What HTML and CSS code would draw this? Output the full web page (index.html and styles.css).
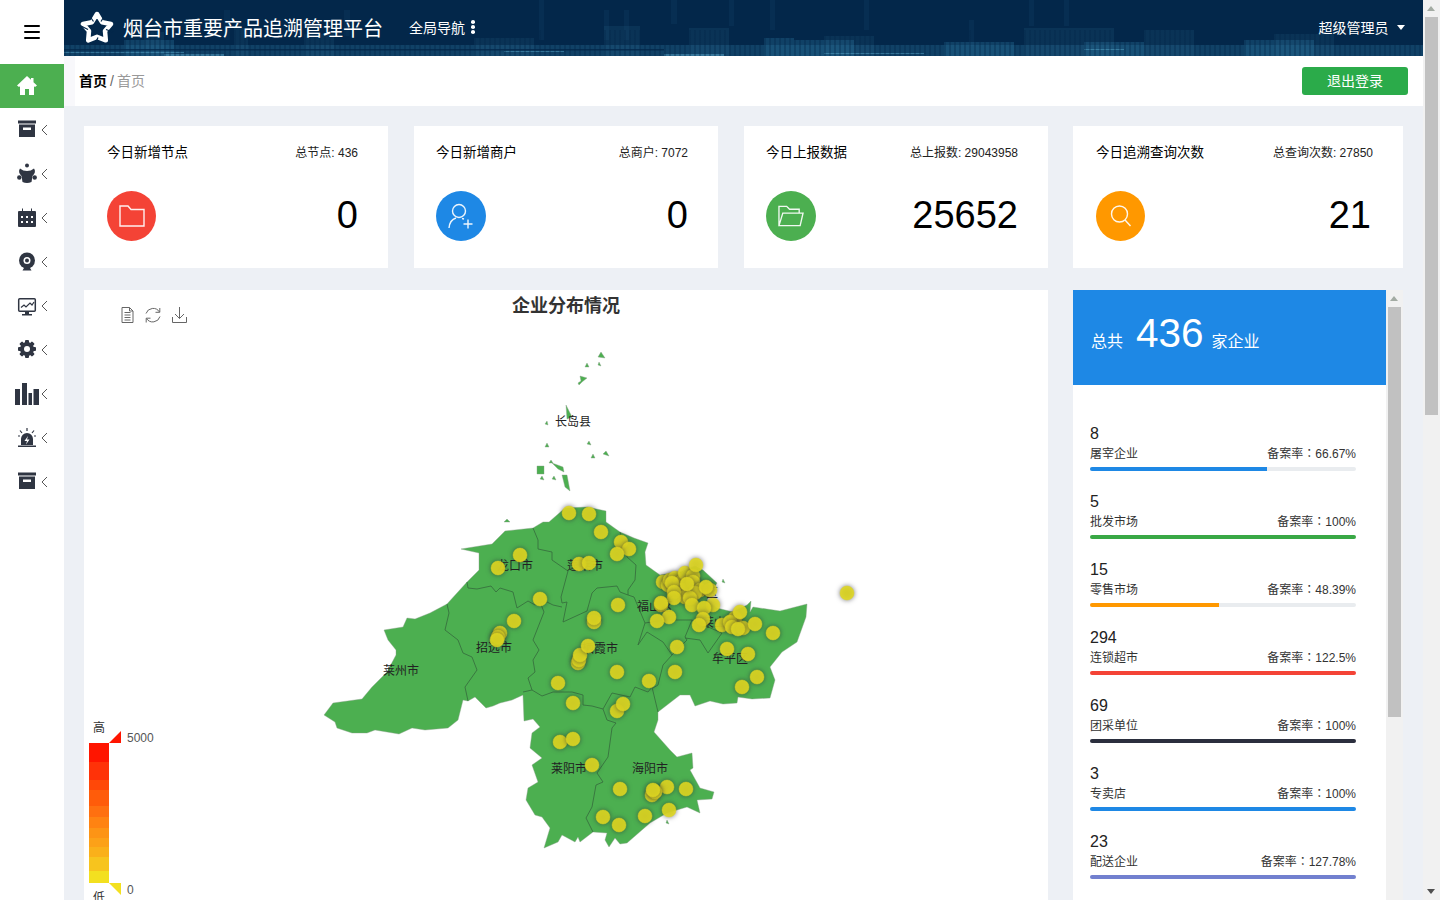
FILE: index.html
```html
<!DOCTYPE html>
<html lang="zh-CN">
<head>
<meta charset="utf-8">
<title>烟台市重要产品追溯管理平台</title>
<link rel="stylesheet" href="styles.css">
</head>
<body>
<div class="app">
  <aside class="sidebar">
    <div class="burger"><span></span><span></span><span></span></div>
    <div class="nav-item active">
      <svg class="nav-icon" viewBox="0 0 24 24"><path class="w" d="M12 2 L2 11.5 L4 13 L5 12.2 V21 H10 V15 H14 V21 H19 V12.2 L20 13 L22 11.5 L18.500 8.200 V4 H16 V5.800 Z"/></svg>
    </div>
    <div class="nav-item">
      <svg class="nav-icon" viewBox="0 0 24 24"><path class="d" d="M3 2.500H21V5.500H3ZM4 6.500H20V19H4Z"/><rect class="w" x="8" y="9.500" width="8" height="2.500"/></svg>
      <svg class="chev" viewBox="0 0 7 12"><path d="M6 1 L1 6 L6 11"/></svg>
    </div>
    <div class="nav-item">
      <svg class="nav-icon" viewBox="0 0 24 24"><circle class="d" cx="12" cy="3.500" r="2"/><path class="d" d="M5 6.500 Q8 9 12 9 Q16 9 19 6.500 Q21.500 10 17.500 14 L16.500 20 Q12 22 7.500 20 L6.500 14 Q2.500 10 5 6.500Z"/><circle class="d" cx="4.300" cy="15.500" r="2.200"/><circle class="d" cx="19.700" cy="15.500" r="2.200"/></svg>
      <svg class="chev" viewBox="0 0 7 12"><path d="M6 1 L1 6 L6 11"/></svg>
    </div>
    <div class="nav-item">
      <svg class="nav-icon" viewBox="0 0 24 24"><rect class="d" x="3" y="5" width="18" height="16" rx="1"/><rect class="d" x="7" y="2.500" width="1" height="3"/><rect class="d" x="16" y="2.500" width="1" height="3"/><path class="w" d="M6 10h2v2H6zM11 10h2v2h-2zM16 10h2v2h-2zM6 15h2v2H6zM11 15h2v2h-2zM16 15h2v2h-2z"/></svg>
      <svg class="chev" viewBox="0 0 7 12"><path d="M6 1 L1 6 L6 11"/></svg>
    </div>
    <div class="nav-item">
      <svg class="nav-icon" viewBox="0 0 24 24"><circle class="d" cx="12" cy="10.500" r="8"/><circle class="w" cx="12" cy="10.500" r="3.500"/><circle class="d" cx="12" cy="10.500" r="2"/><path class="d" d="M9 18H15L16.500 20.500H7.500Z"/></svg>
      <svg class="chev" viewBox="0 0 7 12"><path d="M6 1 L1 6 L6 11"/></svg>
    </div>
    <div class="nav-item">
      <svg class="nav-icon" viewBox="0 0 24 24"><rect class="ol" x="3.700" y="4.700" width="16.600" height="12.600" rx="1"/><polyline class="ln" points="6,13.500 9,11 11,13 15,9 17,11 19,8"/><path class="d" d="M10 18H14V20H10ZM7 20H17V21.500H7Z"/></svg>
      <svg class="chev" viewBox="0 0 7 12"><path d="M6 1 L1 6 L6 11"/></svg>
    </div>
    <div class="nav-item">
      <svg class="nav-icon" viewBox="0 0 24 24"><g class="d"><circle cx="12" cy="11" r="7"/><rect x="10" y="2" width="4" height="18" rx="1"/><rect x="10" y="2" width="4" height="18" rx="1" transform="rotate(45 12 11)"/><rect x="10" y="2" width="4" height="18" rx="1" transform="rotate(90 12 11)"/><rect x="10" y="2" width="4" height="18" rx="1" transform="rotate(135 12 11)"/></g><circle class="w" cx="12" cy="11" r="3"/></svg>
      <svg class="chev" viewBox="0 0 7 12"><path d="M6 1 L1 6 L6 11"/></svg>
    </div>
    <div class="nav-item">
      <svg class="nav-icon" viewBox="0 0 24 24"><path class="d" d="M0 7H5V23H0ZM7 1H12V23H7ZM13.500 11H17V23H13.500ZM18.500 7H24V23H18.500Z"/></svg>
      <svg class="chev" viewBox="0 0 7 12"><path d="M6 1 L1 6 L6 11"/></svg>
    </div>
    <div class="nav-item">
      <svg class="nav-icon" viewBox="0 0 24 24"><path class="d" d="M6 19V13A6 6 0 0 1 18 13V19ZM3 19.500H21V21H3Z"/><path class="w" d="M13 10L9.500 15H12L11 18.500L14.500 13.500H12Z"/><path class="ln" d="M12 2V5M5 4.500L7 7M19 4.500L17 7M3 10H5M19 10H21"/></svg>
      <svg class="chev" viewBox="0 0 7 12"><path d="M6 1 L1 6 L6 11"/></svg>
    </div>
    <div class="nav-item">
      <svg class="nav-icon" viewBox="0 0 24 24"><path class="d" d="M3 2.500H21V5.500H3ZM4 6.500H20V19H4Z"/><rect class="w" x="8" y="9.500" width="8" height="2.500"/></svg>
      <svg class="chev" viewBox="0 0 7 12"><path d="M6 1 L1 6 L6 11"/></svg>
    </div>
  </aside>

  <div class="main">
    <header class="topbar">
      <svg class="skyline" viewBox="0 0 1359 56" preserveAspectRatio="none">
        <g class="sky-a">
          <rect x="80" y="32" width="20" height="24"/><rect x="170" y="28" width="14" height="28"/>
          <rect x="240" y="34" width="30" height="22"/><rect x="410" y="38" width="60" height="18"/>
          <rect x="540" y="26" width="36" height="30"/><rect x="625" y="28" width="40" height="28"/>
          <rect x="760" y="36" width="50" height="20"/>
          <rect x="960" y="28" width="90" height="28"/><rect x="1080" y="30" width="50" height="26"/><rect x="1210" y="34" width="60" height="22"/>
        </g>
        <g class="sky-b">
          <rect x="475" y="0" width="5" height="40"/><rect x="540" y="10" width="5" height="30"/>
          <rect x="560" y="10" width="5" height="30"/><rect x="607" y="0" width="6" height="24"/>
          <rect x="665" y="0" width="5" height="26"/><rect x="706" y="0" width="5" height="30"/>
          <rect x="800" y="0" width="5" height="30"/><rect x="905" y="20" width="5" height="26"/>
          <rect x="965" y="0" width="5" height="26"/><rect x="1000" y="0" width="5" height="26"/>
          <rect x="160" y="10" width="6" height="30"/><rect x="280" y="10" width="6" height="26"/>
        </g>
        <g class="sky-c">
          <rect x="0" y="45" width="1359" height="11"/>
          <rect x="700" y="38" width="30" height="18"/><rect x="730" y="40" width="60" height="16"/>
          <rect x="880" y="42" width="70" height="14"/><rect x="1020" y="42" width="60" height="14"/>
          <rect x="1180" y="40" width="70" height="16"/><rect x="60" y="40" width="50" height="16"/>
        </g>
        <g class="sky-e"><rect x="0" y="49" width="600" height="1.500"/></g>
        <g class="sky-d">
          <rect x="0" y="52" width="120" height="1"/><rect x="100" y="54" width="60" height="2"/>
          <rect x="440" y="51" width="60" height="1"/><rect x="600" y="54" width="60" height="2"/>
          <rect x="760" y="53" width="100" height="1"/><rect x="1020" y="49" width="40" height="1"/>
        </g>
      </svg>
      <svg class="logo" viewBox="0 0 34 34">
        <path class="logo-star" d="M17 3L22 11.200L31 13L25 20L25.800 29.300L17 25.800L8.200 29.300L9 20L3 13L12 11.200Z"/>
        <path class="logo-cut" d="M21 10.500L25 4M26 18.500L33 21M18 26.500L15 33M8 18.500L1 15M13.500 10.500L9 4"/>
      </svg>
      <h1 class="brand">烟台市重要产品追溯管理平台</h1>
      <div class="global-nav">全局导航<span class="kebab"><i></i><i></i><i></i></span></div>
      <div class="user">超级管理员<span class="caret"></span></div>
    </header>
    <div class="crumbbar">
      <div class="crumbs"><b>首页</b><span class="sep">/</span><span class="cur">首页</span></div>
      <button class="logout">退出登录</button>
    </div>
    <div class="content">
      <div class="stats">
        <section class="card edge">
          <div class="card-top"><span class="card-title">今日新增节点</span><span class="card-total">总节点: 436</span></div>
          <div class="card-body">
            <span class="badge red"><svg viewBox="0 0 26 22"><path d="M1 1H9L12 4.500H25V21H1Z"/></svg></span>
            <span class="card-num">0</span>
          </div>
        </section>
        <section class="card">
          <div class="card-top"><span class="card-title">今日新增商户</span><span class="card-total">总商户: 7072</span></div>
          <div class="card-body">
            <span class="badge blue"><svg viewBox="0 0 26 26"><circle cx="11" cy="8" r="6.500"/><path d="M1 25C1.500 19.500 4.500 16 8 15M14 15.500L16 16M20 16.500V25.500M15.500 21H24.500"/></svg></span>
            <span class="card-num">0</span>
          </div>
        </section>
        <section class="card">
          <div class="card-top"><span class="card-title">今日上报数据</span><span class="card-total">总上报数: 29043958</span></div>
          <div class="card-body">
            <span class="badge green"><svg viewBox="0 0 27 22"><path d="M1 21V1H9L12 4H22V8M1 21L5 8H26L23 21Z"/></svg></span>
            <span class="card-num">25652</span>
          </div>
        </section>
      </div>
      <section class="card wide edge">
        <div class="card-top"><span class="card-title">今日追溯查询次数</span><span class="card-total">总查询次数: 27850</span></div>
        <div class="card-body">
          <span class="badge orange"><svg viewBox="0 0 22 22"><circle cx="9.500" cy="9" r="8"/><path d="M15 15L20.500 21"/></svg></span>
          <span class="card-num num-21">21</span>
        </div>
      </section>

      <section class="map-panel">
        <h2 class="map-title">企业分布情况</h2>
        <svg class="map" viewBox="84 290 964 610">
          <g class="tools">
            <path d="M122 307.500H129.500L133 311V322.500H122ZM129.500 307.500V311H133M124.500 312.500H130.500M124.500 315H130.500M124.500 317.500H130.500M124.500 320H130.500"/>
            <path d="M146 313.500A7.500 7.500 0 0 1 159.500 312M160 316.500A7.500 7.500 0 0 1 146.500 318.500M159.800 308V312.300H155.500M146.200 322.500V318.200H150.500"/>
            <path d="M179.500 307V318.500M175 314L179.500 318.500L184 314M172.500 317V322.500H186.500V317"/>
          </g>

          <path class="land" d="M384 630L403 627L407 618L415 619L430 613L447 604L467 582L479 570L479 553L461 549L492 544L505 531L533 528L543 522L549 522L565 508L587 507L606 511L606 522L620 532L634 538L648 543L645 552L646 565L660 575L680 572L695 566L703 570L717 583L707 600L717 608L733 612L747 605L751 601L750 612L753 607L780 611L807 604L806 617L797 642L782 652L770 667L775 680L770 698L752 699L738 697L737 703L723 704L710 701L695 706L690 695L680 695L658 712L658 720L654 732L670 750L677 757L692 753L693 768L690 770L700 788L714 792L712 799L697 800L700 813L687 807L667 813L650 823L627 843L620 844L615 838L609 847L605 840L607 833L593 832L580 842L578 837L575 842L562 835L558 842L544 848L550 828L542 817L535 815L526 800L528 788L538 782L532 765L542 758L530 748L532 733L540 727L533 719L524 721L523 695L512 700L500 703L493 706L486 708L475 697L468 701L463 700L458 720L448 728L425 730L412 728L399 734L375 730L367 733L352 733L337 728L335 722L324 715L333 703L362 699L372 687L387 672L396 655L396 650L388 640Z"/>
          <g class="land">
            <path d="M601 352L598 357L605 358Z"/><path d="M580 376L587 378L582 382L579 385L578 383L581 381Z"/>
            <path d="M587 363L585 367L589 367Z"/><path d="M599 362L598 365L601 366Z"/>
            <path d="M566 405L572 417L567 419Z"/><path d="M547 421L545 424L548 425Z"/>
            <path d="M547 443L545 447L549 447Z"/><path d="M589 441L587 444L591 445Z"/>
            <path d="M593 454L591 458L595 458Z"/><path d="M606 451L603 454L609 456Z"/>
            <path d="M551 460L549 463L553 463Z"/><path d="M552 463L563 467L564 472L558 469Z"/>
            <path d="M537 466H544V474H537Z"/><path d="M542 476L540 479L544 480Z"/><path d="M554 476L552 479L556 480Z"/>
            <path d="M562 475L567 475L570 491L565 487Z"/><path d="M507 519L504 522L510 522Z"/>
            <path d="M723 579L722 582L725 583Z"/><path d="M667 820L666 823L669 824Z"/>
          </g>
          <g class="borders">
            <path d="M533 528L538 540L538 549L552 552L552 560L568 571L561 597L562 603L567 602L563 622L587 611L592 593L597 588L617 586L620 592L628 595"/>
            <path d="M467 582L468 588L477 589L491 586L496 592L500 588L513 592L517 608L528 601L535 605L540 602L547 602L553 605L562 607"/>
            <path d="M447 604L449 613L445 630L458 640L463 653L472 657L477 670L465 687L468 701"/>
            <path d="M540 602L544 612L533 640L539 650L533 660L535 672L528 678L532 690L523 692"/>
            <path d="M532 690L542 696L553 692L572 692L583 695L583 705L592 706L603 709L607 720L616 723L612 728L608 757L597 773L603 782L596 785L592 807L586 818L593 832"/>
            <path d="M603 709L612 693L630 697L635 687L648 692L652 687L658 712"/>
            <path d="M653 688L658 685L663 665L672 655L687 640L685 637L692 620L722 633L708 653L700 640L685 638"/>
            <path d="M620 532L627 557L636 565L635 580L628 590L628 595L634 597L645 623L638 645L647 632L663 642L672 655"/>
            <path d="M645 623L665 620L692 620"/>
          </g>
          <g class="labels">
            <text x="573" y="426">长岛县</text><text x="515" y="570">龙口市</text><text x="585" y="570">蓬莱市</text>
            <text x="655" y="611">福山区</text><text x="700" y="597">芝罘区</text><text x="720" y="627">莱山区</text>
            <text x="730" y="663">牟平区</text><text x="494" y="652">招远市</text><text x="600" y="653">栖霞市</text>
            <text x="401" y="675">莱州市</text><text x="569" y="773">莱阳市</text><text x="650" y="773">海阳市</text>
          </g>
          <g class="dots">
            <circle cx="569" cy="513" r="7"/><circle cx="589" cy="514" r="7"/><circle cx="601" cy="532" r="7"/>
            <circle cx="621" cy="542" r="7"/><circle cx="629" cy="549" r="7"/><circle cx="617" cy="554" r="7"/>
            <circle cx="520" cy="555" r="7"/><circle cx="498" cy="568" r="7"/><circle cx="579" cy="564" r="7"/>
            <circle cx="589" cy="563" r="7"/><circle cx="540" cy="599" r="7"/><circle cx="514" cy="621" r="7"/>
            <circle cx="594" cy="622" r="7"/><circle cx="594" cy="618" r="7"/><circle cx="618" cy="605" r="7"/>
            <circle cx="500" cy="633" r="7"/><circle cx="498" cy="637" r="7"/><circle cx="497" cy="640" r="7"/>
            <circle cx="578" cy="663" r="7"/><circle cx="579" cy="660" r="7"/><circle cx="580" cy="655" r="7"/><circle cx="588" cy="646" r="7"/>
            <circle cx="663" cy="582" r="7"/><circle cx="668" cy="585" r="7"/><circle cx="670" cy="580" r="7"/><circle cx="675" cy="578" r="7"/><circle cx="680" cy="583" r="7"/><circle cx="685" cy="573" r="7"/>
            <circle cx="682" cy="590" r="7"/><circle cx="693" cy="576" r="7"/><circle cx="696" cy="565" r="7"/><circle cx="672" cy="583" r="7"/><circle cx="693" cy="582" r="7"/>
            <circle cx="700" cy="590" r="7"/><circle cx="710" cy="590" r="7"/><circle cx="685" cy="597" r="7"/><circle cx="695" cy="593" r="7"/><circle cx="674" cy="592" r="7"/>
            <circle cx="674" cy="598" r="7"/><circle cx="690" cy="598" r="7"/><circle cx="687" cy="584" r="7"/><circle cx="706" cy="587" r="7"/>
            <circle cx="692" cy="605" r="7"/><circle cx="713" cy="605" r="7"/><circle cx="704" cy="608" r="7"/>
            <circle cx="661" cy="605" r="7"/><circle cx="661" cy="603" r="7"/><circle cx="669" cy="617" r="7"/><circle cx="657" cy="621" r="7"/>
            <circle cx="703" cy="619" r="7"/><circle cx="699" cy="625" r="7"/><circle cx="722" cy="625" r="7"/>
            <circle cx="735" cy="618" r="7"/><circle cx="730" cy="622" r="7"/><circle cx="732" cy="627" r="7"/><circle cx="743" cy="628" r="7"/><circle cx="738" cy="629" r="7"/><circle cx="740" cy="612" r="7"/>
            <circle cx="755" cy="624" r="7"/><circle cx="773" cy="633" r="7"/><circle cx="727" cy="649" r="7"/>
            <circle cx="748" cy="654" r="7"/><circle cx="757" cy="677" r="7"/><circle cx="742" cy="687" r="7"/>
            <circle cx="677" cy="647" r="7"/><circle cx="675" cy="672" r="7"/><circle cx="649" cy="681" r="7"/><circle cx="617" cy="672" r="7"/>
            <circle cx="617" cy="711" r="7"/><circle cx="623" cy="704" r="7"/><circle cx="558" cy="683" r="7"/><circle cx="573" cy="703" r="7"/>
            <circle cx="560" cy="742" r="7"/><circle cx="573" cy="739" r="7"/><circle cx="592" cy="765" r="7"/><circle cx="620" cy="789" r="7"/>
            <circle cx="667" cy="787" r="7"/><circle cx="652" cy="795" r="7"/><circle cx="655" cy="792" r="7"/><circle cx="653" cy="790" r="7"/>
            <circle cx="686" cy="789" r="7"/><circle cx="669" cy="810" r="7"/><circle cx="645" cy="816" r="7"/><circle cx="603" cy="817" r="7"/><circle cx="619" cy="825" r="7"/>
            <circle cx="847" cy="593" r="7"/>
          </g>
          <g class="legend">
            <rect x="89" y="743" width="20" height="19" fill="#ff1500"/>
            <rect x="89" y="762" width="20" height="18" fill="#ff3208"/>
            <rect x="89" y="780" width="20" height="10" fill="#ff4808"/>
            <rect x="89" y="790" width="20" height="16" fill="#ff5c0a"/>
            <rect x="89" y="806" width="20" height="11" fill="#ff7010"/>
            <rect x="89" y="817" width="20" height="11" fill="#ff8312"/>
            <rect x="89" y="828" width="20" height="10" fill="#fd9415"/>
            <rect x="89" y="838" width="20" height="9" fill="#fca118"/>
            <rect x="89" y="847" width="20" height="10" fill="#fab01a"/>
            <rect x="89" y="857" width="20" height="14" fill="#f7c41e"/>
            <rect x="89" y="871" width="20" height="12" fill="#f3e020"/>
            <polygon points="121,731 121,743 109,743" fill="#ff1500"/>
            <polygon points="109,883 121,883 121,895" fill="#f3e020"/>
            <text class="lg-end" x="99" y="732">高</text>
            <text class="lg-val" x="127" y="742">5000</text>
            <text class="lg-val" x="127" y="894">0</text>
            <text class="lg-end" x="99" y="902">低</text>
          </g>
        </svg>
      </section>

      <section class="summary">
        <div class="summary-col">
          <div class="summary-head"><span class="sh-text">总共</span><span class="sh-num">436</span><span class="sh-text">家企业</span></div>
          <div class="rows">
            <div class="row"><div class="row-num">8</div><div class="row-meta"><span>屠宰企业</span><span class="rate" lang="zh-TW">备案率：66.67%</span></div><div class="track"><div class="fill c-blue" style="width:66.67%"></div></div></div>
            <div class="row"><div class="row-num">5</div><div class="row-meta"><span>批发市场</span><span class="rate" lang="zh-TW">备案率：100%</span></div><div class="track"><div class="fill c-green" style="width:100%"></div></div></div>
            <div class="row"><div class="row-num">15</div><div class="row-meta"><span>零售市场</span><span class="rate" lang="zh-TW">备案率：48.39%</span></div><div class="track"><div class="fill c-orange" style="width:48.39%"></div></div></div>
            <div class="row"><div class="row-num">294</div><div class="row-meta"><span>连锁超市</span><span class="rate" lang="zh-TW">备案率：122.5%</span></div><div class="track"><div class="fill c-red" style="width:100%"></div></div></div>
            <div class="row"><div class="row-num">69</div><div class="row-meta"><span>团采单位</span><span class="rate" lang="zh-TW">备案率：100%</span></div><div class="track"><div class="fill c-dark" style="width:100%"></div></div></div>
            <div class="row"><div class="row-num">3</div><div class="row-meta"><span>专卖店</span><span class="rate" lang="zh-TW">备案率：100%</span></div><div class="track"><div class="fill c-blue" style="width:100%"></div></div></div>
            <div class="row"><div class="row-num">23</div><div class="row-meta"><span>配送企业</span><span class="rate" lang="zh-TW">备案率：127.78%</span></div><div class="track"><div class="fill c-indigo" style="width:100%"></div></div></div>
          </div>
        </div>
        <div class="scroll inner"><span class="arrow up"></span><span class="thumb thumb-inner"></span></div>
      </section>
    </div>
  </div>

  <div class="scroll page"><span class="arrow up"></span><span class="thumb thumb-page"></span><span class="arrow down"></span></div>
</div>
</body>
</html>
```

FILE: styles.css
```css
* { box-sizing: border-box; }
html, body { margin: 0; height: 100%; overflow: hidden; }
body {
  font-family: "Liberation Sans", "Noto Sans CJK SC", sans-serif;
  font-size: 14px;
  color: #000;
  background: #edf0f5;
}
.app { display: flex; height: 900px; }

/* sidebar */
.sidebar { width: 64px; flex: none; background: #fff; }
.burger {
  height: 64px;
  display: flex;
  flex-direction: column;
  justify-content: center;
  align-items: center;
  gap: 3.5px;
}
.burger span { display: block; width: 16px; height: 2.5px; background: #000; border-radius: 1px; }
.nav-item { height: 44px; display: flex; align-items: center; padding-left: 15px; }
.nav-item.active { background: #4caf50; }
.nav-icon { width: 24px; height: 24px; flex: none; overflow: visible; }
.chev { width: 7px; height: 12px; margin-left: 2px; }
.chev path { fill: none; stroke: #555; stroke-width: 1; }
.d { fill: #2f3542; }
.w { fill: #fff; }
.ol { fill: #fff; stroke: #2f3542; stroke-width: 1.5; }
.ln { fill: none; stroke: #2f3542; stroke-width: 1.2; }

/* main */
.main { flex: 1; min-width: 0; display: flex; flex-direction: column; overflow: hidden; }
.topbar {
  position: relative;
  height: 56px;
  flex: none;
  display: flex;
  align-items: center;
  padding: 0 18px 0 16px;
  background: #03274a;
  color: #fff;
  overflow: hidden;
}
.topbar::after {
  content: "";
  position: absolute;
  left: 0;
  right: 0;
  bottom: 0;
  height: 26px;
  background: repeating-linear-gradient(90deg, rgba(3, 39, 74, .35) 0 2px, rgba(3, 39, 74, 0) 2px 5px);
}
.skyline { position: absolute; inset: 0; width: 100%; height: 100%; }
.sky-a rect { fill: #1d5478; opacity: .28; }
.sky-b rect { fill: #1d5478; opacity: .18; }
.sky-c rect { fill: #256a92; opacity: .4; }
.sky-d rect { fill: #5fb0d0; opacity: .45; }
.sky-e rect { fill: #03274a; opacity: .8; }
.logo { position: relative; z-index: 1; width: 34px; height: 34px; flex: none; }
.logo-star { fill: none; stroke: #fff; stroke-width: 4.500; stroke-linejoin: round; }
.logo-cut { fill: none; stroke: #03274a; stroke-width: 1.2; }
.brand { position: relative; z-index: 1; margin: 2px 0 0 9px; font-size: 20px; font-weight: 400; line-height: 1; white-space: nowrap; }
.global-nav { position: relative; z-index: 1; margin-left: 26px; padding-bottom: 2px; display: flex; align-items: center; font-size: 14px; }
.kebab { display: flex; flex-direction: column; gap: 1.500px; margin-left: 6px; }
.kebab i { display: block; width: 4px; height: 3.500px; background: #fff; border-radius: 50%; }
.user { position: relative; z-index: 1; margin-left: auto; padding-bottom: 2px; display: flex; align-items: center; font-size: 14px; }
.caret {
  margin-left: 8.500px;
  border-left: 4.500px solid transparent;
  border-right: 4.500px solid transparent;
  border-top: 5px solid #fff;
}
.crumbbar {
  height: 50px;
  flex: none;
  display: flex;
  align-items: center;
  justify-content: space-between;
  padding: 0 15px;
  background: linear-gradient(90deg, #f8f8fb 0, #f8f8fb 11px, #fff 11px);
}
.crumbs { font-size: 14px; color: #333; margin-bottom: 2px; }
.crumbs b { color: #000; }
.crumbs .sep { color: #666; margin: 0 3px; }
.crumbs .cur { color: #999; }
.logout {
  width: 106px;
  height: 28px;
  border: 0;
  border-radius: 3px;
  background: #2bab4a;
  color: #fff;
  font: inherit;
  font-size: 14px;
  padding: 0 0 2px;
}

/* dashboard */
.content {
  flex: 1;
  min-height: 0;
  overflow: hidden;
  padding: 20px 0 0 20px;
  display: grid;
  grid-template-columns: 964px 330px;
  grid-template-rows: 142px 1fr;
  column-gap: 25px;
  row-gap: 22px;
}
.stats { display: grid; grid-template-columns: repeat(3, 304px); column-gap: 26px; }
.card { background: #fff; padding: 16px 30px 0 22px; }
.card.edge { padding-left: 23px; }
.card-top { display: flex; justify-content: space-between; align-items: center; height: 18px; }
.card-title { font-size: 13.500px; }
.card-total { font-size: 12px; color: #222; }
.card-body { display: flex; justify-content: space-between; align-items: center; margin-top: 31px; height: 50px; }
.card-num { font-size: 38px; line-height: 1; margin-top: -2px; }
.num-21 { margin-right: 2px; }
.badge { width: 50px; height: 50px; border-radius: 50%; display: flex; align-items: center; justify-content: center; }
.edge .badge { width: 49px; }
.badge svg { width: 26px; height: 24px; fill: none; stroke: #fff; stroke-width: 1.4; opacity: .92; }
.red { background: #f44336; }
.blue { background: #1e88e5; }
.blue svg { height: 26px; }
.green { background: #4caf50; }
.orange { background: #ff9800; }
.orange svg { width: 22px; height: 22px; }

/* map */
.map-panel { position: relative; background: #fff; min-height: 0; overflow: hidden; }
.map-title {
  margin: 0;
  padding-top: 5px;
  text-align: center;
  font-size: 18px;
  line-height: 22px;
  font-weight: 700;
  color: #333;
  position: relative;
  z-index: 1;
}
.map { position: absolute; left: 0; top: 0; width: 964px; height: 610px; }
.land { fill: #4caf50; stroke: #8aa08c; stroke-width: .4; }
.borders path { fill: none; stroke: #35693c; stroke-width: .8; }
.labels text { font-size: 12px; fill: #222; text-anchor: middle; }
.dots circle { fill: #e0d821; fill-opacity: .9; stroke: #e0d821; stroke-opacity: .9; stroke-width: .5; filter: drop-shadow(0 0 2.500px rgba(40, 40, 50, .7)); }
.tools path { fill: none; stroke: #666; stroke-width: 1; }
.lg-end { font-size: 12px; fill: #333; text-anchor: middle; }
.lg-val { font-size: 12px; fill: #555; }

/* summary */
.summary { display: flex; min-height: 0; overflow: hidden; }
.summary-col { width: 313px; flex: none; background: #fff; }
.summary-head {
  height: 95px;
  background: #1e88e5;
  color: #fff;
  display: flex;
  align-items: baseline;
  padding: 21px 0 0 18px;
}
.sh-text { font-size: 16px; }
.sh-num { font-size: 40.500px; line-height: 44px; margin: 0 8px 0 13px; }
.rows { padding: 39px 30px 0 17px; }
.row { margin-bottom: 21px; }
.row-num { font-size: 16px; line-height: 20px; color: #222; }
.row-meta { display: flex; justify-content: space-between; font-size: 12px; line-height: 20px; color: #333; }
.rate { font-family: "Liberation Sans", "Noto Sans CJK TC", sans-serif; }
.track { margin-top: 3px; height: 4px; background: #e9ecef; border-radius: 2px; overflow: hidden; }
.fill { height: 100%; }
.c-blue { background: #1e88e5; }
.c-green { background: #39a845; }
.c-orange { background: #ff9800; }
.c-red { background: #f44336; }
.c-dark { background: #2b2f3e; }
.c-indigo { background: #7280cf; }

/* scrollbars */
.scroll { width: 17px; flex: none; background: #f1f1f1; display: flex; flex-direction: column; align-items: center; }
.page { height: 900px; }
.inner { height: 100%; }
.arrow { width: 17px; height: 17px; flex: none; position: relative; }
.arrow::after { content: ""; position: absolute; left: 4px; border-left: 4.500px solid transparent; border-right: 4.500px solid transparent; }
.arrow.up::after { top: 6px; border-bottom: 5px solid #a3aba3; }
.arrow.down { margin-top: auto; }
.arrow.down::after { top: 6px; border-top: 5px solid #505050; }
.thumb { width: 13px; flex: none; background: #c1c1c1; }
.thumb-page { height: 398px; }
.thumb-inner { height: 410px; }
```
